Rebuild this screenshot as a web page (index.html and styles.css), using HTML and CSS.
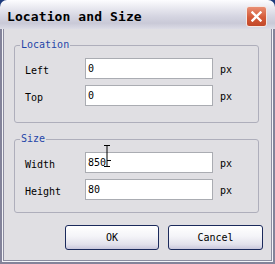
FILE: index.html
```html
<!DOCTYPE html>
<html>
<head>
<meta charset="utf-8">
<title>Location and Size</title>
<link rel="stylesheet" href="styles.css">
</head>
<body>
<div class="window">
  <div class="titlebar">
    <span class="title">Location and Size</span>
    <span class="close">
      <svg width="11" height="11" viewBox="0 0 11 11"><path d="M1.5 1.5 L9.5 9.5 M9.5 1.5 L1.5 9.5" stroke="#fff" stroke-width="2.4" stroke-linecap="square" fill="none"/></svg>
    </span>
  </div>
  <div class="frame">
    <div class="content">
      <fieldset class="group group-location">
        <legend>Location</legend>
        <div class="row"><label class="label">Left</label><div class="field">0</div><span class="unit">px</span></div>
        <div class="row"><label class="label">Top</label><div class="field">0</div><span class="unit">px</span></div>
      </fieldset>
      <fieldset class="group group-size">
        <legend>Size</legend>
        <div class="row"><label class="label">Width</label><div class="field">850</div><span class="unit">px</span></div>
        <div class="row"><label class="label">Height</label><div class="field">80</div><span class="unit">px</span></div>
      </fieldset>
      <div class="buttons">
        <button class="btn btn-ok">OK</button>
        <button class="btn btn-cancel">Cancel</button>
      </div>
    </div>
  </div>
  <!-- mouse pointer over the width field -->
  <svg class="ibeam" width="9" height="23" viewBox="0 0 9 23">
    <path d="M1 0.5 H7 M4 0.5 V21.5 M1 21.5 H7 M4 15.5 H8" stroke="#000" stroke-width="1" fill="none"/>
  </svg>
</div>
</body>
</html>
```

FILE: styles.css
```css
body {
  margin: 0;
  background-color: #1d3b7c;
  font-family: "DejaVu Sans Mono", "Liberation Mono", monospace;
  font-size: 10px;
  color: #000;
}

.window {
  position: relative;
  width: 275px;
  height: 264px;
  display: flex;
  flex-direction: column;
  border-radius: 7px 7px 0 0;
  overflow: hidden;
}

.titlebar {
  height: 29px;
  box-sizing: border-box;
  padding: 4px 8px 0 7px;
  display: flex;
  align-items: center;
  justify-content: space-between;
  background: linear-gradient(#fdfdff 0%, #eeeef4 20%, #d6d6e2 55%, #c9c9d7 80%, #dcdce6 100%);
}

.title {
  font-weight: bold;
  font-size: 13px;
  letter-spacing: 0.1px;
  color: #000;
}

.close {
  width: 21px;
  height: 21px;
  box-sizing: border-box;
  border: 1px solid #f4e8e4;
  border-radius: 3px;
  background: linear-gradient(#e98f74, #d45a38 55%, #c2482a);
  display: flex;
  align-items: center;
  justify-content: center;
}

.frame {
  flex: 1;
  display: flex;
  border: 2px solid #83839a;
  border-top: none;
  padding: 0 1px 1px;
  background: #f3f3f7;
}

.content {
  flex: 1;
  border: 1px solid #8c8ca0;
  border-top: none;
  background: #e0dfe3;
  padding: 10px 12px 0 10px;
}

.group {
  margin: 0;
  border: 1px solid #aeaebb;
  border-radius: 3px;
  padding: 7px 0 16px 10px;
  display: flex;
  flex-direction: column;
  gap: 6px;
}

.group-size {
  margin-top: 10px;
  padding-bottom: 12px;
}

.group legend {
  margin-left: -5px;
  padding: 0 1px;
  line-height: 12px;
  color: #1f45a8;
}

.row {
  display: flex;
  align-items: center;
  height: 21px;
}

.label {
  width: 60px;
  padding-top: 3px;
}

.field {
  width: 128px;
  height: 21px;
  box-sizing: border-box;
  border: 1px solid #aaacb2;
  background: #fff;
  padding: 0 2px;
  line-height: 19px;
}

.unit {
  margin-left: 7px;
  padding-top: 2px;
}

.buttons {
  display: flex;
  justify-content: flex-end;
  gap: 9px;
  margin: 12px -4px 0 0;
}

.btn {
  height: 25px;
  border: 1px solid #1b2a5c;
  border-radius: 3px;
  background: linear-gradient(#ffffff, #f4f4f8 45%, #e2e1ec 80%, #c9c7dc);
  font-family: "DejaVu Sans Mono", "Liberation Mono", monospace;
  font-size: 10px;
  color: #000;
  padding: 0;
}

.btn-ok {
  width: 94px;
}

.btn-cancel {
  width: 95px;
}

.ibeam {
  position: absolute;
  left: 103px;
  top: 145px;
}
```
